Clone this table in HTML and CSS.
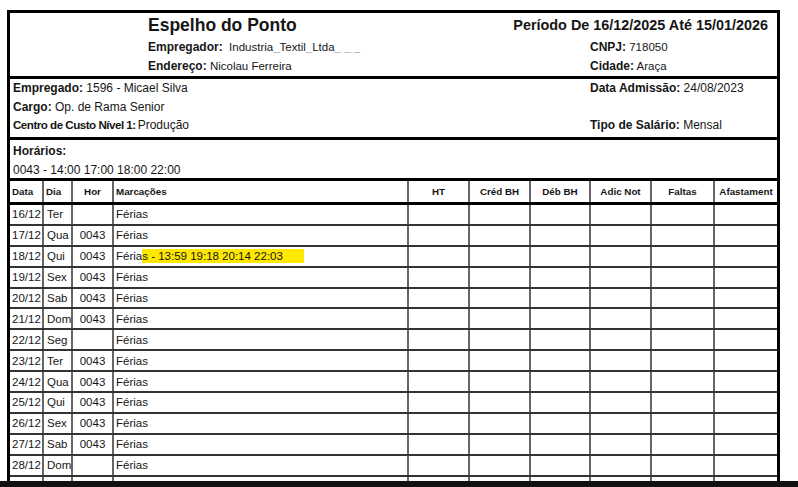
FILE: index.html
```html
<!DOCTYPE html>
<html lang="pt-BR">
<head>
    <meta charset="UTF-8">
    <title>Espelho do Ponto</title>
    <link rel="stylesheet" href="styles.css">
</head>
<body>
    <div class="sheet">
        <div class="head">
            <div class="head-top">
                <h1>Espelho do Ponto</h1>
                <div class="periodo">Período De 16/12/2025 Até 15/01/2026</div>
            </div>
            <div class="head-info">
                <div><b>Empregador:</b>&nbsp; Industria<span class="us">_</span>Textil<span class="us">_</span>Ltda<span class="us">_ _ _</span></div>
                <div><b>CNPJ:</b> 718050</div>
                <div><b>Endereço:</b> Nicolau Ferreira</div>
                <div><b>Cidade:</b> Araça</div>
            </div>
        </div>
        <div class="emp">
            <div><b>Empregado:</b> 1596 - Micael Silva</div>
            <div><b>Data Admissão:</b> 24/08/2023</div>
            <div><b>Cargo:</b> Op. de Rama Senior</div>
            <div></div>
            <div><b class="narrow">Centro de Custo Nível 1:</b>Produção</div>
            <div><b>Tipo de Salário:</b> Mensal</div>
        </div>
        <div class="hor">
            <div><b>Horários:</b></div>
            <div>0043 - 14:00 17:00 18:00 22:00</div>
        </div>
        <div class="row thead">
            <div class="c">Data</div>
            <div class="c">Dia</div>
            <div class="c mid">Hor</div>
            <div class="c">Marcações</div>
            <div class="c mid">HT</div>
            <div class="c mid">Créd BH</div>
            <div class="c mid">Déb BH</div>
            <div class="c mid">Adic Not</div>
            <div class="c mid">Faltas</div>
            <div class="c mid">Afastament</div>
        </div>
        <div class="row"><div class="c">16/12</div><div class="c dia">Ter</div><div class="c mid"></div><div class="c">Férias</div><div class="c"></div><div class="c"></div><div class="c"></div><div class="c"></div><div class="c"></div><div class="c"></div></div>
        <div class="row"><div class="c">17/12</div><div class="c dia">Qua</div><div class="c mid">0043</div><div class="c">Férias</div><div class="c"></div><div class="c"></div><div class="c"></div><div class="c"></div><div class="c"></div><div class="c"></div></div>
        <div class="row"><div class="c">18/12</div><div class="c dia">Qui</div><div class="c mid">0043</div><div class="c">Féria<span class="hl">s - 13:59 19:18 20:14 22:03</span></div><div class="c"></div><div class="c"></div><div class="c"></div><div class="c"></div><div class="c"></div><div class="c"></div></div>
        <div class="row"><div class="c">19/12</div><div class="c dia">Sex</div><div class="c mid">0043</div><div class="c">Férias</div><div class="c"></div><div class="c"></div><div class="c"></div><div class="c"></div><div class="c"></div><div class="c"></div></div>
        <div class="row"><div class="c">20/12</div><div class="c dia">Sab</div><div class="c mid">0043</div><div class="c">Férias</div><div class="c"></div><div class="c"></div><div class="c"></div><div class="c"></div><div class="c"></div><div class="c"></div></div>
        <div class="row"><div class="c">21/12</div><div class="c dia">Dom</div><div class="c mid">0043</div><div class="c">Férias</div><div class="c"></div><div class="c"></div><div class="c"></div><div class="c"></div><div class="c"></div><div class="c"></div></div>
        <div class="row"><div class="c">22/12</div><div class="c dia">Seg</div><div class="c mid"></div><div class="c">Férias</div><div class="c"></div><div class="c"></div><div class="c"></div><div class="c"></div><div class="c"></div><div class="c"></div></div>
        <div class="row"><div class="c">23/12</div><div class="c dia">Ter</div><div class="c mid">0043</div><div class="c">Férias</div><div class="c"></div><div class="c"></div><div class="c"></div><div class="c"></div><div class="c"></div><div class="c"></div></div>
        <div class="row"><div class="c">24/12</div><div class="c dia">Qua</div><div class="c mid">0043</div><div class="c">Férias</div><div class="c"></div><div class="c"></div><div class="c"></div><div class="c"></div><div class="c"></div><div class="c"></div></div>
        <div class="row"><div class="c">25/12</div><div class="c dia">Qui</div><div class="c mid">0043</div><div class="c">Férias</div><div class="c"></div><div class="c"></div><div class="c"></div><div class="c"></div><div class="c"></div><div class="c"></div></div>
        <div class="row"><div class="c">26/12</div><div class="c dia">Sex</div><div class="c mid">0043</div><div class="c">Férias</div><div class="c"></div><div class="c"></div><div class="c"></div><div class="c"></div><div class="c"></div><div class="c"></div></div>
        <div class="row"><div class="c">27/12</div><div class="c dia">Sab</div><div class="c mid">0043</div><div class="c">Férias</div><div class="c"></div><div class="c"></div><div class="c"></div><div class="c"></div><div class="c"></div><div class="c"></div></div>
        <div class="row"><div class="c">28/12</div><div class="c dia">Dom</div><div class="c mid"></div><div class="c">Férias</div><div class="c"></div><div class="c"></div><div class="c"></div><div class="c"></div><div class="c"></div><div class="c"></div></div>
        <div class="row"><div class="c">29/12</div><div class="c dia">Seg</div><div class="c mid"></div><div class="c">Férias</div><div class="c"></div><div class="c"></div><div class="c"></div><div class="c"></div><div class="c"></div><div class="c"></div></div>
    </div>
    <div class="taskbar"></div>
</body>
</html>
```

FILE: styles.css
```css
*{ margin: 0; padding: 0; box-sizing: border-box }
html,body{
    height:100%;
    overflow: hidden;
}
body{
    background: #fff;
    color: #161616;
    font-family: "Liberation Sans", Arial, sans-serif;
}
.sheet{
    width:773px;
    margin: 10px 0 0 7px;
    border: 3px solid #000;
    border-bottom: 0;
}
.head{
    height:66px;
    padding: 0 9px 1px 138px;
    border-bottom: 3px solid #000;
}
.head-top{
    height:24px;
    display: flex;
    justify-content: space-between;
    align-items: center;
}
.head-top h1{
    font-size: 17.5px;
    font-weight: bold;
    padding-top: 1px;
}
.periodo{
    font-size: 14.4px;
    font-weight: bold;
}
.head-info{
    display: grid;
    grid-template-columns: 442px 1fr;
    grid-auto-rows: 19px;
    align-items: center;
    font-size: 11.5px;
}
.head-info b{
    font-size: 12px;
}
.us{
    color: #aaa;
}
.emp{
    display: grid;
    grid-template-columns: 577px 1fr;
    grid-auto-rows: 18.5px;
    align-items: center;
    padding: 0 0 2.5px 3px;
    border-bottom: 3px solid #000;
    font-size: 12px;
}
.emp .narrow{
    font-size: 11.6px;
    letter-spacing: -0.5px;
    margin-right: 2px;
}
.hor{
    height:41px;
    padding: 1.5px 0 0 3px;
    border-bottom: 3px solid #000;
    font-size: 12px;
}
.hor div{
    height:19px;
    line-height: 19px;
}
.row{
    display: grid;
    grid-template-columns: 34px 29px 41px 295px 61px 61px 60px 61px 63px 1fr;
    height:20.9px;
    border-bottom: 2px solid #333;
    font-size: 11.5px;
}
.row .c{
    display: flex;
    align-items: center;
    padding-left: 2px;
    border-right: 2px solid #666;
    white-space: nowrap;
    overflow: hidden;
}
.row .c:last-child{
    border-right: 0;
}
.row .dia{
    padding-left: 3px;
}
.row .mid{
    justify-content: center;
    padding-left: 0;
}
.thead{
    height:24px;
    border-bottom: 3px solid #000;
    font-size: 9.8px;
    font-weight: bold;
}
.hl{
    background: #ffe800;
    padding: 1px 21px 1px 0;
}
.taskbar{
    position: fixed;
    left:0;
    right:0;
    bottom:0;
    height:6px;
    background: #111;
}
```
